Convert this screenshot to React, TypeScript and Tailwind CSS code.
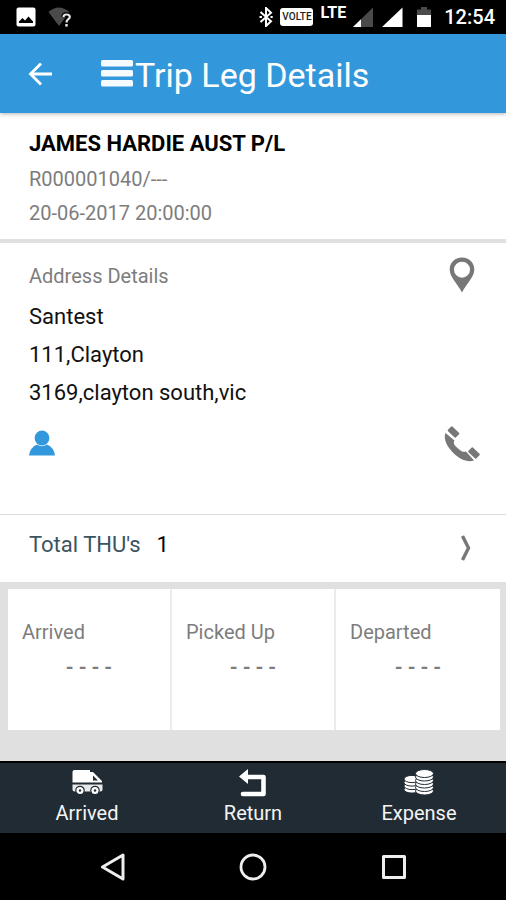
import type { ReactNode } from "react"

const endereco = ["Santest", "111,Clayton", "3169,clayton south,vic"]

const horarios = [
    { id: "arrived", titulo: "Arrived", valor: "----" },
    { id: "picked", titulo: "Picked Up", valor: "----" },
    { id: "departed", titulo: "Departed", valor: "----" }
]

const StatusBar = () => (
    <div className="flex items-center h-[34px] bg-black pl-4 pr-[11px] text-white">
        <div className="flex items-center gap-3">
            {/* Imagem */}
            <svg viewBox="0 0 20 20" className="w-5 h-5">
                <rect x="0.5" y="0.5" width="19" height="19" rx="2" fill="#fff" />
                <path d="M3 16 V14.5 L6.5 11 L9 13.5 L12.5 9.5 L17 14.5 V16 Z" fill="#000" />
            </svg>
            {/* Wifi */}
            <svg viewBox="0 0 24 20" className="w-6 h-5">
                <path d="M0.5 5 Q10.5 -4 21.5 5 L11 19 Z" fill="#4a4a4a" />
                <path d="M15.5 10 Q15.5 7.5 18.5 7.5 Q21.8 7.5 21.8 10 Q21.8 11.3 20 12.4 Q18.5 13.4 18.5 15.5" fill="none" stroke="#000" strokeWidth="4.5" />
                <path d="M15.5 10 Q15.5 7.5 18.5 7.5 Q21.8 7.5 21.8 10 Q21.8 11.3 20 12.4 Q18.5 13.4 18.5 15.5" fill="none" stroke="#e8e8e8" strokeWidth="2.2" />
                <rect x="17.3" y="17" width="2.4" height="2.6" fill="#e8e8e8" />
            </svg>
        </div>
        <div className="flex items-center ml-auto">
            <svg viewBox="0 0 14 20" className="w-[14px] h-5">
                <path d="M1.5 5 L12 14.3 L7 19 V1 L12 5.7 L1.5 15" fill="none" stroke="#fff" strokeWidth="2" />
                <path d="M0.5 10h2.4M11.5 10h2.2" stroke="#fff" strokeWidth="2" />
            </svg>
            <span className="ml-[7px] w-[33px] h-[18px] rounded-[3px] bg-white text-[#222] text-[10px] leading-[18px] font-medium text-center">VOLTE</span>
            <span className="ml-[7px] mb-2 text-[16px] leading-4 font-bold">LTE</span>
            <svg viewBox="0 0 21 21" className="ml-[7px] w-[21px] h-[21px]">
                <path d="M20 0.5 V20 H0 Z" fill="#4a4a4a" />
                <path d="M8 12.2 V20 H0 Z" fill="#fff" />
            </svg>
            <svg viewBox="0 0 21 21" className="ml-2 w-[21px] h-[21px]">
                <path d="M20.5 0.5 V20 H0 Z" fill="#fff" />
            </svg>
            <svg viewBox="0 0 14 21" className="ml-[14px] w-[14px] h-[21px]">
                <path d="M0 2.5 H4 V0 H10 V2.5 H14 V8 H0 Z" fill="#4a4a4a" />
                <rect y="8" width="14" height="12" fill="#fff" />
            </svg>
            <span className="ml-[13px] text-[20px] leading-[34px] font-medium">12:54</span>
        </div>
    </div>
)

const Cabecalho = () => (
    <header className="relative flex items-center h-[79px] bg-[#3398db] pl-7 shadow-[0_1px_4px_rgba(0,0,0,0.3)]">
        <button aria-label="Back" className="w-6 h-6">
            <svg viewBox="0 0 24 24" className="w-6 h-6" fill="none" stroke="#fff" strokeWidth="2.8">
                <path d="M24 12 H3 M13 1.5 L2.5 12 L13 22.5" />
            </svg>
        </button>
        <button aria-label="Menu" className="ml-[49px] w-8 h-7">
            <svg viewBox="0 0 32 28" className="w-8 h-7" fill="#f4fafe">
                <rect y="0" width="32" height="6.5" rx="1.5" />
                <rect y="10" width="32" height="6.5" rx="1.5" />
                <rect y="20" width="32" height="6.5" rx="1.5" />
            </svg>
        </button>
        <h1 className="text-[34px] leading-10 text-white ml-[2px] mt-[2px]">Trip Leg Details</h1>
    </header>
)

const BotaoRodape = ({ titulo, children }: { titulo: string; children: ReactNode }) => (
    <button className="flex flex-col items-center text-[#f4f4f4]">
        {children}
        <span className="text-[20px] leading-6 mt-[2px]">{titulo}</span>
    </button>
)

const Rodape = () => (
    <footer className="grid grid-cols-3 h-[72px] bg-[#212b34] border-t-2 border-black pt-1 px-1">
        <BotaoRodape titulo="Arrived">
            <svg viewBox="0 0 32 32" className="w-8 h-8">
                <path d="M1.5 15.5 V5 Q1.5 3 3.5 3 H19 V5 H22 L31 14 V15.5 Z" fill="#fff" />
                <path d="M22 8.5 L27 13.5 H22 Z" fill="#212b34" />
                <path d="M1.5 17.5 H31.5 V22.5 Q31.5 24.5 29.5 24.5 H3.5 Q1.5 24.5 1.5 22.5 Z" fill="#e8e8e8" />
                <circle cx="9" cy="23.5" r="4.2" fill="#fff" stroke="#212b34" strokeWidth="1.2" />
                <circle cx="24" cy="23.5" r="4.2" fill="#fff" stroke="#212b34" strokeWidth="1.2" />
                <circle cx="9" cy="23.5" r="1.2" fill="#212b34" />
                <circle cx="24" cy="23.5" r="1.2" fill="#212b34" />
            </svg>
        </BotaoRodape>
        <BotaoRodape titulo="Return">
            <svg viewBox="0 0 32 32" className="w-8 h-8">
                <path d="M9 10 H26.5 V27 H6" fill="none" stroke="#fff" strokeWidth="4.6" strokeLinecap="round" strokeLinejoin="round" />
                <path d="M2 9.5 L11 2 V17 Z" fill="#fff" />
            </svg>
        </BotaoRodape>
        <BotaoRodape titulo="Expense">
            <svg viewBox="0 0 32 32" className="w-8 h-8" fill="#fff" stroke="#212b34" strokeWidth="1">
                {[22.5, 19, 15.5, 12].map((y) => (
                    <ellipse key={y} cx="9" cy={y} rx="8" ry="3.6" />
                ))}
                {[24, 20.5, 17, 13.5, 10, 6.5].map((y) => (
                    <ellipse key={y} cx="21.5" cy={y} rx="9" ry="4" />
                ))}
            </svg>
        </BotaoRodape>
    </footer>
)

const BarraNavegacao = () => (
    <nav className="flex items-center justify-center gap-[113px] h-[67px] bg-black">
        <button aria-label="Android back">
            <svg viewBox="0 0 28 28" className="w-7 h-7" fill="none" stroke="#eee" strokeWidth="3" strokeLinejoin="round">
                <path d="M25 2 V26 L4.5 14 Z" />
            </svg>
        </button>
        <button aria-label="Home">
            <svg viewBox="0 0 28 28" className="w-7 h-7" fill="none" stroke="#eee" strokeWidth="2.8">
                <circle cx="14" cy="14" r="12" />
            </svg>
        </button>
        <button aria-label="Recent apps">
            <svg viewBox="0 0 28 28" className="w-7 h-7" fill="none" stroke="#eee" strokeWidth="3" strokeLinejoin="round">
                <rect x="3.5" y="3.5" width="21" height="21" />
            </svg>
        </button>
    </nav>
)

export default function App() {
    return (
        <div className="flex flex-col min-h-screen bg-white font-['Roboto',sans-serif] text-[#7d7d7d]">
            <StatusBar />
            <Cabecalho />

            {/* Cliente */}
            <section className="px-[29px] pt-[13px] pb-[9px] border-b-4 border-[#e0e0e0]">
                <h2 className="text-[22px] leading-9 font-bold text-black">JAMES HARDIE AUST P/L</h2>
                <p className="text-[20px] leading-[34px]">R000001040/---</p>
                <p className="text-[20px] leading-[34px]">20-06-2017 20:00:00</p>
            </section>

            {/* Endereço */}
            <section className="flex justify-between pl-[29px] pr-[26px] pt-[14px] pb-[52px] border-b border-[#dcdcdc]">
                <div className="pb-[6px]">
                    <h3 className="text-[20px] leading-[38px] mb-[3px]">Address Details</h3>
                    {endereco.map((linha) => (
                        <p key={linha} className="text-[22px] leading-[38px] text-[#111]">{linha}</p>
                    ))}
                    <svg viewBox="0 0 26 26" className="w-[26px] h-[26px] mt-[18px]" fill="#3398db">
                        <path d="M0 25.5 Q1 17.5 8 14.5 Q13 18 18 14.5 Q25 17.5 26 25.5 Z" />
                        <circle cx="13" cy="8" r="7.4" />
                    </svg>
                </div>
                <div className="flex flex-col items-center justify-between">
                    <button aria-label="Show on map">
                        <svg viewBox="0 0 26 36" className="w-[26px] h-9" fill="#777">
                            <path fillRule="evenodd" d="M13 0.5 C5.8 0.5 0.7 5.8 0.7 12.5 C0.7 20 8 26 13 35.5 C18 26 25.3 20 25.3 12.5 C25.3 5.8 20.2 0.5 13 0.5 Z M13 4.7 A8 8 0 1 1 13 20.7 A8 8 0 1 1 13 4.7 Z" />
                        </svg>
                    </button>
                    <button aria-label="Call">
                        <svg viewBox="0 0 36 36" className="w-9 h-9" fill="#777">
                            <path d="M1.5 7 L10.5 14.5 C9 17 10 19 13.5 22 C17.5 25.5 19.5 26.5 22 25.5 L30 34.5 C25 36.5 18 34.5 11.5 29 C3 21.5 -1 13 1.5 7 Z" />
                            <rect x="-5.5" y="-3.2" width="11" height="6.4" rx="1" transform="translate(9.5 6) rotate(43)" />
                            <rect x="-5.5" y="-3.2" width="11" height="6.4" rx="1" transform="translate(30 27) rotate(43)" />
                        </svg>
                    </button>
                </div>
            </section>

            {/* Total */}
            <button className="flex items-center h-[67px] pl-[29px] pr-[34px] pb-1 text-[22px] leading-[30px]">
                <span className="text-[#3c5460] pb-1">Total THU's</span>
                <span className="ml-4 text-black pb-1">1</span>
                <svg viewBox="0 0 12 28" className="ml-auto w-3 h-7" fill="none" stroke="#777" strokeWidth="3.4">
                    <path d="M2.5 3 L8.5 15 L2.5 27" />
                </svg>
            </button>

            {/* Horários */}
            <section className="grow bg-[#e0e0e0] pl-2 pr-[6px] pt-[7px]">
                <div className="grid grid-cols-3 h-[141px] bg-white divide-x-2 divide-[#ebebeb]">
                    {horarios.map((horario) => (
                        <div key={horario.id} className="px-[14px] pt-7">
                            <h4 className="text-[20px] leading-[30px]">{horario.titulo}</h4>
                            <p className="text-[20px] leading-10 font-bold text-center">{horario.valor.split("").join(" ")}</p>
                        </div>
                    ))}
                </div>
            </section>

            <Rodape />
            <BarraNavegacao />
        </div>
    )
}
